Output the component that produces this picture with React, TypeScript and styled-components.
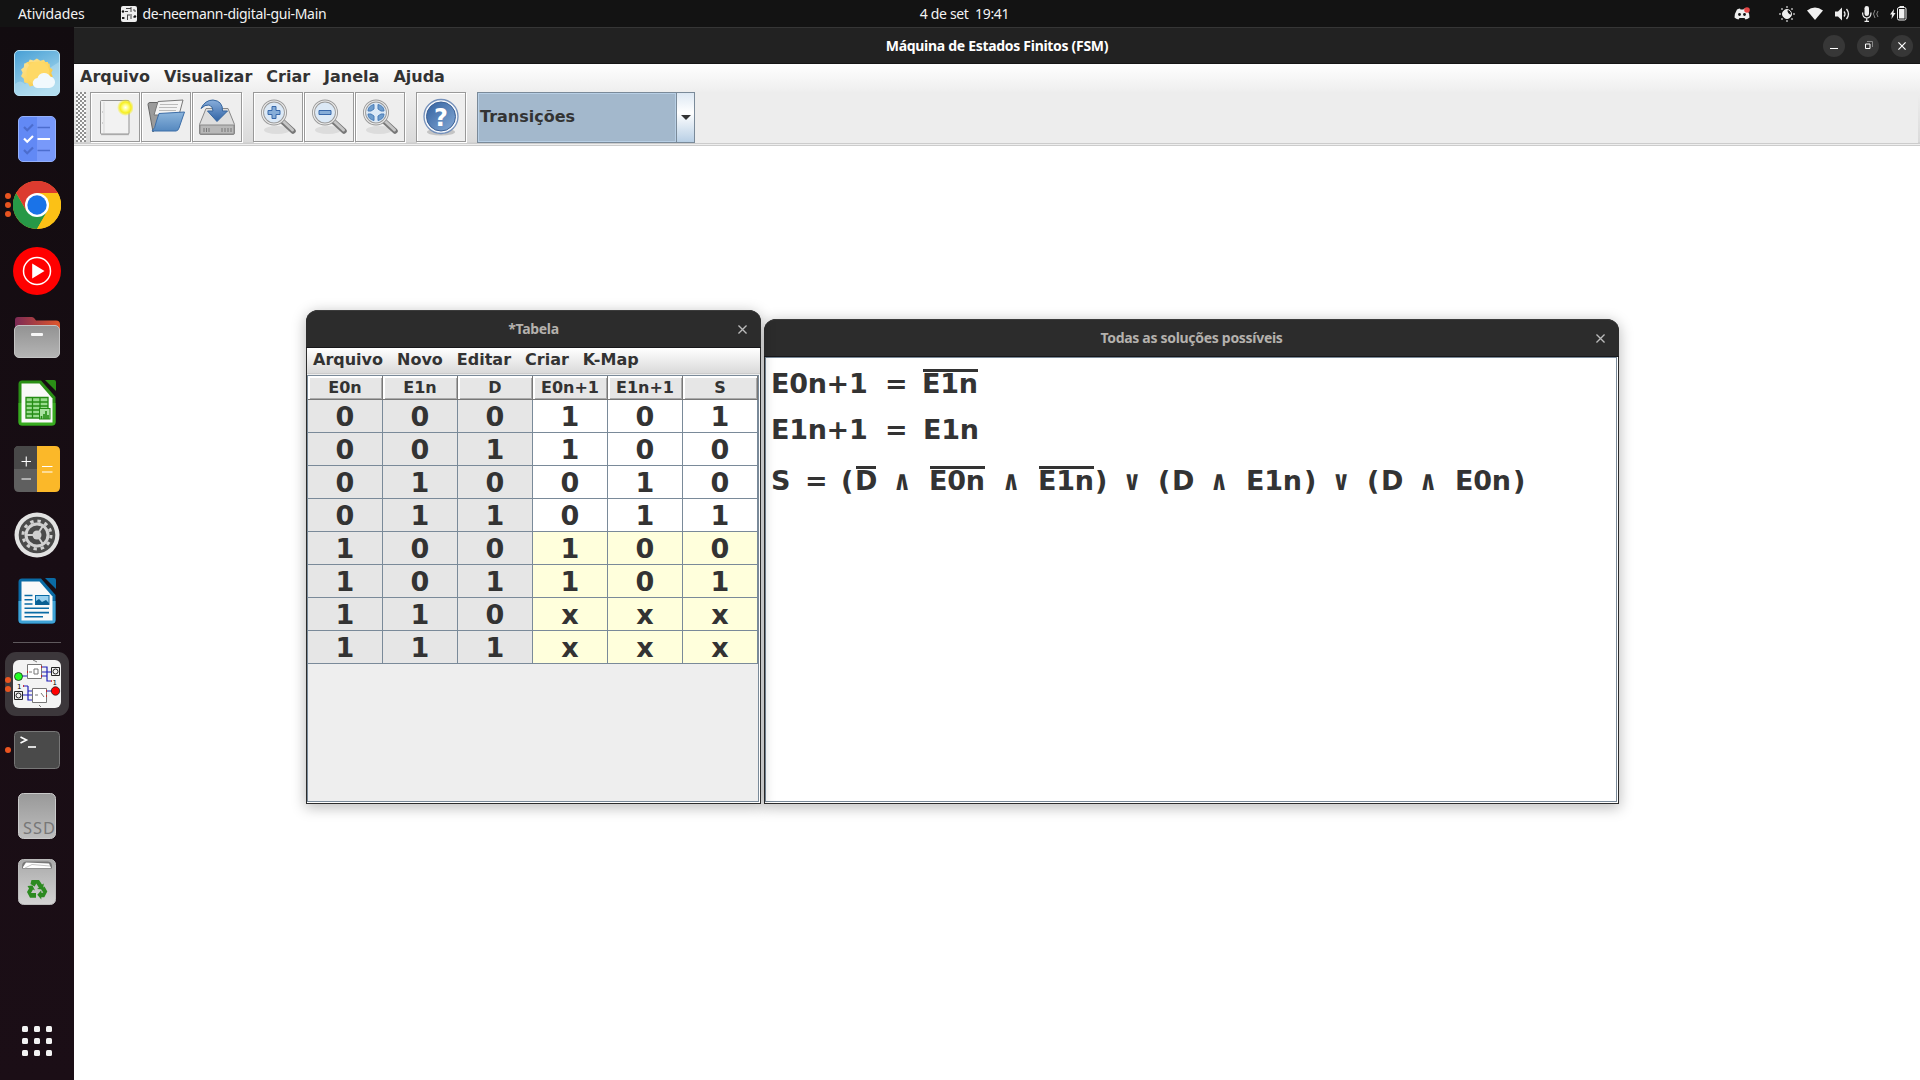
import React from "react";
import styled, { createGlobalStyle, css } from "styled-components";

const Global = createGlobalStyle`
  *{box-sizing:border-box}
  html,body{margin:0;padding:0;background:#fff;overflow:hidden}
  svg{display:block;flex:none}
`;

const swing = `"DejaVu Sans", sans-serif`;
const shell = `"Noto Sans", "Open Sans", sans-serif`;

const Desktop = styled.div`
  width:1920px;height:1080px;display:flex;flex-direction:column;
  position:relative;overflow:hidden;font-family:${swing};color:#333;background:#fff;
`;

/* ---------- top bar ---------- */
const TopBar = styled.header`
  height:27px;flex:none;background:#131313;color:#f2f2f2;
  display:grid;grid-template-columns:1fr auto 1fr;align-items:center;
  font:14px/27px ${shell};padding:0 13px 0 18px;white-space:pre;
`;
const TopLeft = styled.div`display:flex;align-items:center;height:27px;`;
const TopText = styled.span<{ $ls?: number }>`letter-spacing:${p => p.$ls ?? 0}px;`;
const AppName = styled.div`display:flex;align-items:center;gap:6px;margin-left:36px;`;
const Tray = styled.div`display:flex;align-items:center;justify-content:flex-end;height:27px;`;
const TrayItem = styled.span<{ $gap?: number }>`margin-left:${p => p.$gap ?? 12}px;`;
const Clock = styled.div`letter-spacing:-.35px;transform:translateX(2px);`;

const Body = styled.div`flex:1;display:flex;min-height:0;`;

/* ---------- dock ---------- */
const Dock = styled.nav`
  width:74px;flex:none;background:linear-gradient(#120c10,#180d14 50%,#1b0e16);
  display:flex;flex-direction:column;align-items:center;padding-top:13px;
`;
const DockItem = styled.div`
  width:74px;height:66px;flex:none;display:grid;
  grid-template-columns:12px 52px 10px;align-items:center;
`;
const Dots = styled.div`
  display:flex;flex-direction:column;align-items:center;gap:3px;padding-left:4px;
`;
const Dot = styled.i`width:6px;height:6px;border-radius:50%;background:#e95420;flex:none;`;
const DockIcon = styled.div<{ $active?: boolean }>`
  display:flex;align-items:center;justify-content:center;width:50px;height:64px;
  ${p => p.$active && css`width:64px;margin-left:-7px;background:#3c373b;border-radius:11px;`}
`;
const ActiveDots = styled(Dots)`z-index:1;`;
const DockRule = styled.div`height:17px;display:flex;align-items:center;
  &::before{content:"";width:48px;height:1px;background:#5f595d;}`;
const Launcher = styled.div`
  margin-top:auto;margin-bottom:24px;display:grid;grid-template-columns:repeat(3,6px);gap:6px;
`;
const LauncherDot = styled.i`width:6px;height:6px;border-radius:1.5px;background:#f3f3f3;`;

/* ---------- main window ---------- */
const MainWindow = styled.main`flex:1;display:flex;flex-direction:column;min-width:0;`;
const MainTitle = styled.div`
  height:37px;background:#222;border-top:1px solid #363636;border-bottom:1px solid #161616;
  display:grid;grid-template-columns:1fr auto 1fr;align-items:center;color:#fff;
  font:bold 14px/35px ${shell};
`;
const TitleText = styled.span<{ $ls?: number }>`grid-column:2;white-space:nowrap;letter-spacing:${p => p.$ls ?? 0}px;`;
const Controls = styled.div`display:flex;justify-content:flex-end;gap:12px;padding-right:7px;`;
const RoundButton = styled.button`
  width:22px;height:22px;border:0;padding:0;border-radius:50%;background:#373737;
  display:flex;align-items:center;justify-content:center;
`;
const MenuBar = styled.div<{ $inner?: boolean }>`
  display:flex;white-space:nowrap;font:bold 16px/26px ${swing};
  height:28px;padding-left:6px;gap:14px;background:linear-gradient(#fff,#eee);
  ${p => p.$inner && css`
    height:27px;line-height:24px;padding-left:6px;gap:14px;
    background:linear-gradient(#fff,#dadada 25px,#ccc 25px,#ccc 26px,#eee 26px);
  `}
`;
const MenuItem = styled.span<{ $w?: number }>`width:${p => p.$w ? p.$w + "px" : "auto"};`;
const ToolBar = styled.div`
  height:54px;display:flex;align-items:flex-start;padding-left:2px;
  background:linear-gradient(#eee,#dadada 50px,#ccc 51px,#ccc 52px,#eee 52px,#eee 53px,#ccc 53px);
`;
const Grip = styled.div`
  width:10px;height:50px;margin-right:4px;
  background:
    radial-gradient(circle at 1px 1px,#888 .7px,transparent .8px) 0 0/4px 4px,
    radial-gradient(circle at 1px 1px,#888 .7px,transparent .8px) 2px 2px/4px 4px,#fafafa;
`;
const ToolGroup = styled.div`display:flex;gap:1px;margin-right:11px;`;
const ToolButton = styled.button`
  width:50px;height:50px;padding:0;border:1px solid #999;background:#eee;
  box-shadow:inset 1px 1px #fff,1px 1px #fff;display:flex;align-items:center;justify-content:center;
`;
const Combo = styled.div`
  width:218px;height:51px;display:flex;border:1px solid #7a8a99;
`;
const ComboText = styled.div`
  width:198px;border:1px solid #b8cfe5;border-right-width:1px;background:#a3b8cc;
  font:bold 16px/46px ${swing};padding-left:1px;
`;
const ComboArrow = styled.div`
  flex:1;border-left:1px solid #7a8a99;background:linear-gradient(#dde8f3,#fff 40%,#b8cfe5);
  display:flex;align-items:center;justify-content:center;
  &::after{content:"";border:5px solid transparent;border-top-color:#333;border-bottom:0;}
`;
const ToolFill = styled.div`flex:1;height:51px;background:#ededed;margin-right:2px;`;
const Canvas = styled.div`flex:1;background:#fff;`;

/* ---------- dialogs ---------- */
const Dialog = styled.section<{ $x: number; $y: number; $w: number; $h: number }>`
  position:absolute;left:${p => p.$x}px;top:${p => p.$y}px;width:${p => p.$w}px;height:${p => p.$h}px;
  display:flex;flex-direction:column;background:#2c2c2c;border-radius:12px 12px 0 0;
  box-shadow:0 3px 14px 1px rgba(0,0,0,.26);padding:0 1px 1px;
`;
const DialogTitle = styled.div`
  height:38px;flex:none;margin:0 -1px;border-top:1px solid #3c3c3c;border-bottom:1px solid #17171a;
  border-radius:12px 12px 0 0;background:#2c2c2c;color:#b4b1ad;
  display:grid;grid-template-columns:1fr auto 1fr;align-items:center;
  font:bold 14px/36px ${shell};
`;
const CloseX = styled.div<{ $r?: number }>`justify-self:end;padding-right:${p => p.$r ?? 14}px;`;
const DialogBody = styled.div`flex:1;background:#fff;display:flex;flex-direction:column;min-height:0;`;
const ScrollFrame = styled.div<{ $bg: string }>`
  flex:1;border:1px solid #7a8a99;margin:0 1px 1px 0;background:${p => p.$bg};min-height:0;
`;
const HeadRow = styled.div`display:grid;grid-template-columns:repeat(6,75px);height:24px;background:#e6e6e6;`;
const HeadCell = styled.div`
  text-align:center;font:bold 16px/23px ${swing};background:#e6e6e6;
  border-right:1px solid #777;border-bottom:1px solid #777;
  box-shadow:inset 2px 2px #fff,inset -1px -1px #aaa;
`;
const Row = styled.div`display:grid;grid-template-columns:repeat(6,75px);height:33px;`;
const Cell = styled.div<{ $bg: string }>`
  background:${p => p.$bg};border-right:1px solid #7a8a99;border-bottom:1px solid #7a8a99;
  font:bold 27px/33px ${swing};text-align:center;height:33px;overflow:hidden;
`;
const Formula = styled.div<{ $mt: number }>`
  display:flex;height:30px;margin-top:${p => p.$mt}px;padding-left:5px;
  font:bold 27px/30px ${swing};white-space:pre;
`;
const Term = styled.span<{ $w: number }>`width:${p => p.$w}px;flex:none;letter-spacing:-.3px;`;
const Not = styled.span<{ $w: number }>`
  display:block;width:${p => p.$w}px;height:30px;margin-left:1px;text-indent:-1px;
  background:linear-gradient(#333,#333) 0 0/100% 3px no-repeat;
`;
const Op = styled.span<{ $w: number }>`width:${p => p.$w}px;flex:none;font-family:"DejaVu Sans Mono",monospace;`;

/* ---------- drawings ---------- */
const DigitalIcon = ({ s = 48 }: { s?: number }) => (
  <svg width={s} height={s} viewBox="0 0 48 48">
    <rect width="48" height="48" rx="6" fill="#f3f3f3" />
    <g fill="none" stroke="#2020b8" strokeWidth="1.2">
      <path d="M8 16H15M28 7H34V21H38M28 12H38M28 16H34M15 26H10M15 26V40H20M10 35H20M15 31H20M33 31H40" />
    </g>
    <g fill="none" stroke="#777"><path d="M14.5 4.5H28.5V18.5H14.5ZM19.5 28.5H33.5V42.5H19.5Z" fill="#fff" /><path d="M16 12H19M21 9H25V14H21ZM24 2L20 0M22 35H25M28 33L31 37M26 45L28 47" /></g>
    <g fill="none" stroke="#222"><path d="M38.500 7.500h8v8h-8zM1.500 31.500h8v8h-8z" /><circle cx="42.500" cy="11.500" r="2.500" /><circle cx="5.500" cy="35.500" r="2.500" /></g>
    <circle cx="5.500" cy="16.500" r="4" fill="#2f2" stroke="#222" strokeWidth=".8" />
    <circle cx="42.500" cy="31" r="4.200" fill="#f00" stroke="#222" strokeWidth=".8" />
    <path d="M28 7h1M28 16h1M14 12h1M10 26h1M38 21h1M33 31h1M33 36h1" stroke="#d11" strokeWidth="1.600" />
    <text x="39.500" y="24.500" fontFamily="DejaVu Sans" fontSize="7">1</text>
    <text x="4" y="29" fontFamily="DejaVu Sans" fontSize="7">1</text>
  </svg>
);

const MiniDigital = () => (
  <svg width="16" height="16" viewBox="0 0 16 16"><rect width="16" height="16" rx="2" fill="#eee" />
    <path d="M5 2.500h5M10 1v5M4 5.500h3M12 4h2v2M6 9h5M6.500 9v5M3 11v2M10 10v3M12 11h2" fill="none" stroke="#444" />
    <circle cx="2" cy="5.500" r="1.200" fill="#111" /><circle cx="14" cy="10.500" r="1.200" fill="#111" /><path d="M1 11h2v2H1z" fill="#222" /></svg>
);

const Weather = () => (
  <svg width="46" height="46" viewBox="0 0 46 46">
    <defs><linearGradient id="sky" x2=".5" y2="1"><stop stopColor="#479fd5" /><stop offset="1" stopColor="#a9daee" /></linearGradient>
      <linearGradient id="sun" x2="1" y2="1"><stop stopColor="#fbe6a0" /><stop offset=".5" stopColor="#fdd663" /><stop offset="1" stopColor="#f4bd32" /></linearGradient></defs>
    <rect x=".5" y=".5" width="45" height="45" rx="4.500" fill="url(#sky)" stroke="#b9e2f4" />
    <path d="M1 34q5-5 10 0l34-22v29q0 4-4 4H5q-4 0-4-4z" fill="#bfe3f2" opacity=".45" />
    <path d="M23 8l3.500 2.300 4-1 2 3.500 4 .7.400 4 3 2.500-1.700 3.500 1.700 3.600-3 2.700-.4 4-4 .7-2 3.500-4-1L23 39l-3.500-2.300-4 1-2-3.500-4-.7-.4-4-3-2.700 1.700-3.600-1.700-3.500 3-2.500.4-4 4-.7 2-3.500 4 1z" transform="translate(1.300 1) scale(.94)" fill="url(#sun)" />
    <path d="M12 12h22v20z" fill="#fdd663" /><circle cx="24" cy="23" r="11.500" fill="#fed966" />
    <path d="M24 38a5 5 0 0 1-.5-10 7 7 0 0 1 12.800-1.500A5.800 5.800 0 0 1 35 38z" fill="#f1f9fd" />
  </svg>
);
const Tasks = () => (
  <svg width="38" height="46" viewBox="0 0 38 46">
    <rect x=".5" y=".5" width="37" height="45" rx="4.500" fill="#6289f5" stroke="#94b0fb" />
    <path d="M19 1h14q4 0 4 4v36q0 4-4 4H19z" fill="#7899fa" />
    <g fill="none" strokeWidth="2.200"><path d="M6 11l3.200 3.200L15 8.500M6 34l3.200 3.200L15 31.500" stroke="#4c6dce" /><path d="M19.500 11.500H32M19.500 34.500H32" stroke="#4c6dce" strokeWidth="1.700" /><path d="M6 22.500l3.200 3.200L15 20M19.500 23H32" stroke="#fff" /></g>
  </svg>
);
const Chrome = () => (
  <svg width="48" height="48" viewBox="0 0 48 48">
    <circle cx="24" cy="24" r="24" fill="#fbc116" />
    <path d="M24 24L3.200 12A24 24 0 0 1 44.800 12z" fill="#dc3b2f" />
    <path d="M3.200 12A24 24 0 0 0 24 48l10.400-18L24 24 13.600 30z" fill="#279847" />
    <path d="M44.800 12A24 24 0 0 1 24 48L34.400 30 24 12z" fill="#fbc116" />
    <path d="M3.200 12A24 24 0 0 1 44.800 12H24L13.600 30z" fill="#dc3b2f" />
    <circle cx="24" cy="24" r="12" fill="#fff" /><circle cx="24" cy="24" r="9.700" fill="#1a73e8" />
  </svg>
);
const YtMusic = () => (
  <svg width="48" height="48" viewBox="0 0 48 48"><circle cx="24" cy="24" r="24" fill="#f00" /><circle cx="24" cy="24" r="13.500" fill="none" stroke="#fff" strokeWidth="1.500" /><path d="M19.200 16.500v15L31.500 24z" fill="#fff" /></svg>
);
const Files = () => (
  <svg width="46" height="42" viewBox="0 0 46 42">
    <defs><linearGradient id="fo"><stop stopColor="#7c2a55" /><stop offset="1" stopColor="#e0572b" /></linearGradient><linearGradient id="fg" x2="0" y2="1"><stop stopColor="#929292" /><stop offset="1" stopColor="#b5b5b5" /></linearGradient></defs>
    <path d="M1 20V4q0-3 3-3h14q1.500 0 2.500 1.500L22 4.500h20q4 0 4 4V20z" fill="url(#fo)" />
    <rect x=".5" y="9.500" width="45" height="32" rx="4.500" fill="url(#fg)" stroke="#c4c4c4" /><rect x="17" y="17" width="12" height="3" rx="1" fill="#f7f7f7" />
  </svg>
);
const OfficeDoc = ({ a, b, children }: { a: string; b: string; children: React.ReactNode }) => (
  <svg width="38" height="46" viewBox="0 0 38 46">
    <path d="M4 .5H23L37.500 17V42q0 3.500-3.500 3.500H4Q.5 45.500.5 42V4Q.5.500 4 .5z" fill={a} />
    <path d="M.5 23H37.500V42q0 3.500-3.500 3.500H4Q.5 45.500.5 42z" fill={b} />
    <path d="M3.500 3.500H21.500L34.500 18.500V42.500H3.500z" fill="#f9f9f9" />
    <path d="M27 0h9q2 0 2 2v9z" fill={a} />{children}
  </svg>
);
const Calc = () => (
  <OfficeDoc a="#2a8f16" b="#38ab20">
    <path d="M8 17.500H30V38H8z" fill="#98dc8d" /><path d="M8 17.500H30V38H8zM8 22h22M8 26h22M8 30h22M8 34h22M14.500 17.500V38M22 17.500V38" fill="none" stroke="#248c14" strokeWidth="1.300" />
    <rect x="21.500" y="28.500" width="10.500" height="10.500" fill="#a9e2a1" stroke="#248c14" /><path d="M23.500 39v-3M26 39v-5M28 39v-8M30 39v-4" stroke="#248c14" strokeWidth="1.600" />
  </OfficeDoc>
);
const Writer = () => (
  <OfficeDoc a="#0a6ba5" b="#3fa3d6">
    <path d="M6.500 17.500h8M6.500 21.700h8M6.500 26h8M6.500 30.300H31M6.500 34.600H31M6.500 38.800H25" stroke="#0a6ba5" strokeWidth="1.600" />
    <rect x="17.500" y="17.500" width="13.500" height="9" fill="#9bd1ef" stroke="#0a6ba5" /><path d="M18 27v-4l3-2 3 3 4-2 3 3v2z" fill="#0a5f93" />
  </OfficeDoc>
);
const Calculator = () => (
  <svg width="46" height="46" viewBox="0 0 46 46">
    <path d="M23 0v46H5q-5 0-5-5V5q0-5 5-5z" fill="#5f5f5f" /><path d="M23 0v23H0V5q0-5 5-5z" fill="#484848" />
    <path d="M23 0h18q5 0 5 5v36q0 5-5 5H23z" fill="#fbb829" /><path d="M7.500 15.500h9.500M12.250 10.500v10M7.500 33h9.500M28 20.500h10.500M28 26h10.500" stroke="#fff" strokeWidth="1.100" />
  </svg>
);
const Settings = () => (
  <svg width="46" height="46" viewBox="0 0 46 46">
    <circle cx="23" cy="23" r="22.500" fill="#e2e2e2" /><circle cx="23" cy="23" r="18.300" fill="#4a4a4a" />
    <circle cx="23" cy="23" r="14" fill="none" stroke="#d0d0d0" strokeWidth="3" strokeDasharray="3.400 3.930" />
    <circle cx="23" cy="23" r="11" fill="none" stroke="#d0d0d0" strokeWidth="3" />
    <circle cx="23" cy="23" r="4.500" fill="#d0d0d0" /><path d="M23 23H12M23 23l6.500-10M23 23l6.500 10" stroke="#d0d0d0" strokeWidth="2" />
  </svg>
);
const Terminal = () => (
  <svg width="46" height="38" viewBox="0 0 46 38"><rect x=".5" y=".5" width="45" height="37" rx="4" fill="#4a4a4a" stroke="#777" />
    <path d="M6.500 6l6 3-6 3" fill="none" stroke="#fff" strokeWidth="1.600" /><path d="M14 16h8" stroke="#fff" strokeWidth="1.600" /></svg>
);
const Ssd = () => (
  <svg width="38" height="46" viewBox="0 0 38 46"><defs><linearGradient id="sd" x2="0" y2="1"><stop stopColor="#999" /><stop offset="1" stopColor="#bdbdbd" /></linearGradient></defs>
    <rect x=".5" y=".5" width="37" height="45" rx="5" fill="url(#sd)" stroke="#cacaca" /><text x="5" y="40.500" fontFamily="Noto Sans" fontSize="16.500" textLength="32" fill="#777">SSD</text></svg>
);
const Trash = () => (
  <svg width="38" height="46" viewBox="0 0 38 46"><defs><linearGradient id="tr" x2="0" y2="1"><stop stopColor="#aaa" /><stop offset="1" stopColor="#d3d3d3" /></linearGradient></defs>
    <rect x=".5" y=".5" width="37" height="45" rx="5" fill="url(#tr)" stroke="#bbb" />
    <path d="M4 9.500q-.5-7 4-7h22q4.500 0 4 7z" fill="#777" /><path d="M5 8l3-4.500 23 1 2 4.500H5z" fill="#fff" /><path d="M7 9l7-3.500L32 7" fill="none" stroke="#aaa" strokeWidth=".7" />
    <g fill="#2c8a20"><g id="ar"><path d="M14 21.500h7.500l3 4.500 1.800-1L25.500 31l-6-.5 1.900-1.200-2.600-4.300-1.700 3-4.100-2.400z" transform="translate(-.5 -.5)" /></g>
      <path d="M9.500 27l5-.5 2.500 5-2-1-2 3.500h5v4.700h-6L9 33l2-3.500z" /><path d="M26.500 27.500l2.800 5-3 5.700h-3v2.300l-4-4.700 4-4.500v2.400h2l-2.200-3.700z" /></g></svg>
);

const NewFile = () => (
  <svg width="36" height="38" viewBox="0 0 36 38"><defs><radialGradient id="glow"><stop stopColor="#fff" /><stop offset=".3" stopColor="#ffff90" /><stop offset=".65" stopColor="#f6ee20" /><stop offset="1" stopColor="#f6ee20" stopOpacity="0" /></radialGradient></defs>
    <path d="M4 36h28" stroke="#999" strokeWidth="2.500" opacity=".5" /><rect x="3.500" y="2.500" width="28.500" height="33.500" rx="1" fill="#f2f2f2" stroke="#929292" /><path d="M7 4v31" stroke="#d9d9d9" /><path d="M5 14h1M5 25h1" stroke="#aaa" />
    <circle cx="28.500" cy="9.500" r="8.500" fill="url(#glow)" /></svg>
);
const OpenFile = () => (
  <svg width="40" height="36" viewBox="0 0 40 36"><defs><linearGradient id="of" x2="0" y2="1"><stop stopColor="#8db6dd" /><stop offset="1" stopColor="#5588bf" /></linearGradient></defs>
    <path d="M2 5.500q0-2 2-2h9v20L7 33z" fill="#9b9b9b" stroke="#666" /><path d="M12 2.500l25-1.500-4 15H8z" fill="#f3f3f3" stroke="#777" /><path d="M14 5.500h18M13 8.500h18M13 11.500h17" stroke="#bbb" />
    <path d="M13 14.500L38.500 13 33 29q-1 3-3 3H6q3-2 4.500-10z" fill="url(#of)" stroke="#3d6ea8" /></svg>
);
const SaveFile = () => (
  <svg width="40" height="37" viewBox="0 0 40 37"><defs><linearGradient id="sv" x2="0" y2="1"><stop stopColor="#89aedb" /><stop offset="1" stopColor="#2f62a4" /></linearGradient></defs>
    <path d="M9 9.500h22l6.500 16V34q0 1.500-1.500 1.500H4q-1.500 0-1.500-1.500v-8.500z" fill="#dedede" stroke="#888" /><path d="M3 26h34v8q0 1-1 1H4q-1 0-1-1z" fill="#b8b8b8" stroke="#888" /><path d="M7 29v4M9.500 29v4M12 29v4M25 29v4M28 29v4M31 29v4M34 29v4" stroke="#777" />
    <path d="M4 9.500Q8 1 16 1q10 1 9.500 11h5L20 22.500 10.500 12h5.500q0-5-4-6-4-.5-8 3.500z" fill="url(#sv)" stroke="#34659f" /></svg>
);
const Zoom = ({ kind }: { kind: "in" | "out" | "fit" }) => (
  <svg width="40" height="38" viewBox="0 0 40 38">
    <ellipse cx="19" cy="32" rx="13" ry="4" fill="#bbb" opacity=".35" />
    <path d="M24 23l11 10" stroke="#777" strokeWidth="5.500" strokeLinecap="round" /><path d="M25 23l9.500 9" stroke="#c6c6c6" strokeWidth="3" strokeLinecap="round" />
    <circle cx="16" cy="14.500" r="11.500" fill="#dce9f6" stroke="#999" strokeWidth="3" /><circle cx="16" cy="14.500" r="11.500" fill="none" stroke="#eee" strokeWidth="1.200" />
    {kind === "in" && <path d="M14 8.500h4v4h4v4h-4v4h-4v-4h-4v-4h4z" fill="#86add8" stroke="#3768ab" />}
    {kind === "out" && <path d="M10 12.500h12v4H10z" fill="#86add8" stroke="#3768ab" />}
    {kind === "fit" && <path d="M14 6.500v4.500l-3 2H8q0-5 6-6.500zM18 6.500v4.500l3 2h3q0-5-6-6.500zM14 22.500V18l-3-2H8q0 5 6 6.500zM18 22.500V18l3-2h3q0 5-6 6.500z" fill="#6f9dcc" stroke="#4a7db8" />}
  </svg>
);
const Help = () => (
  <svg width="38" height="38" viewBox="0 0 38 38"><defs><linearGradient id="hp" x2="1" y2="1"><stop stopColor="#31609f" /><stop offset="1" stopColor="#86aad6" /></linearGradient></defs>
    <ellipse cx="19" cy="34" rx="14" ry="3.500" fill="#999" opacity=".5" /><circle cx="19" cy="18.500" r="17" fill="#f5f8fc" stroke="#7591bb" strokeWidth="1.300" /><circle cx="19" cy="18.500" r="14.500" fill="url(#hp)" stroke="#3d6297" />
    <text x="19" y="27.500" textAnchor="middle" fontFamily="DejaVu Sans" fontWeight="bold" fontSize="24" fill="#fff">?</text></svg>
);

const Discord = () => (
  <svg width="16" height="14" viewBox="0 0 16 14"><path d="M3 2.500Q5 1.500 6 1.500l.5 1h3l.5-1q1 0 3 1 2.500 4 2.500 8-1.500 1.500-4 2L10.500 11h-5L4.500 12.500Q2 12 .5 10.500q0-4 2.500-8z" fill="#eee" /><circle cx="5.500" cy="7.500" r="1.400" fill="#131313" /><circle cx="10.500" cy="7.500" r="1.400" fill="#131313" /><circle cx="13" cy="3" r="2.800" fill="#e64545" /></svg>
);
const Night = () => (
  <svg width="16" height="16" viewBox="0 0 16 16"><circle cx="8" cy="8" r="4.500" fill="none" stroke="#eee" /><path d="M8 3.500A4.500 4.500 0 1 0 12.500 8 4 4 0 0 1 8 3.500z" fill="#eee" transform="rotate(8 8 8)" /><g fill="#888"><path d="M7 0h2v2H7zM7 14h2v2H7zM0 7h2v2H0zM14 7h2v2h-2zM2 2h2v2H2zM12 2h2v2h-2zM2 12h2v2H2zM12 12h2v2h-2z" /></g></svg>
);
const Wifi = () => <svg width="16" height="13" viewBox="0 0 16 13"><path d="M0 3.500Q8-2.500 16 3.500L8 13z" fill="#f1f1f1" /></svg>;
const Volume = () => <svg width="15" height="14" viewBox="0 0 15 14"><path d="M0 4.500h3L7 .5v13l-4-4H0z" fill="#eee" /><path d="M9 4.500q2 2.500 0 5M11.500 2q4 5 0 10" stroke="#eee" strokeWidth="1.300" fill="none" /></svg>;
const Mic = () => <svg width="17" height="16" viewBox="0 0 17 16"><rect x="2.500" y="0" width="4.500" height="10" rx="2.250" fill="#eee" /><path d="M.6 6.500Q.5 12 4.750 12T9 6.500M4.750 12v3.500M2.500 15.400h4.500" stroke="#eee" strokeWidth="1.200" fill="none" /><path d="M13 4q-3 4 0 8M16 5q-2.500 3 0 6" stroke="#888" fill="none" /></svg>;
const Battery = () => <svg width="17" height="15" viewBox="0 0 17 15"><path d="M4 3L0 8.500h2L1.500 13l4-6h-2z" fill="#eee" /><rect x="7.500" y="1.500" width="8.500" height="12.500" rx="1.500" fill="none" stroke="#eee" /><path d="M9 3h5.500v9.500H9zM9.500 0h4.500v1H9.500z" fill="#eee" /></svg>;
const Cross = ({ s, c }: { s: number; c: string }) => <svg width={s} height={s} viewBox="0 0 8 8"><path d="M.4.4l7.200 7.200M7.600.4L.4 7.600" stroke={c} strokeWidth="1.200" /></svg>;

const dockTop = [
  { icon: <Weather />, dots: 0 }, { icon: <Tasks />, dots: 0 }, { icon: <Chrome />, dots: 3 },
  { icon: <YtMusic />, dots: 0 }, { icon: <Files />, dots: 0 }, { icon: <Calc />, dots: 0 },
  { icon: <Calculator />, dots: 0 }, { icon: <Settings />, dots: 0 }, { icon: <Writer />, dots: 0 },
];
const dockBottom = [
  { icon: <DigitalIcon />, dots: 2, active: true }, { icon: <Terminal />, dots: 1 },
  { icon: <Ssd />, dots: 0 }, { icon: <Trash />, dots: 0 },
];
const DockEntry = ({ icon, dots, active }: { icon: React.ReactNode; dots: number; active?: boolean }) => (
  <DockItem>
    <ActiveDots>{Array.from({ length: dots }, (_, i) => <Dot key={i} />)}</ActiveDots>
    <DockIcon $active={active}>{icon}</DockIcon>
  </DockItem>
);

const columns = ["E0n", "E1n", "D", "E0n+1", "E1n+1", "S"];
const truth = ["000101", "001100", "010010", "011011", "100100", "101101", "110xxx", "111xxx"];
const cellColor = (r: number, c: number) => (c < 3 ? "#e6e6e6" : r < 4 ? "#fff" : "#ffffdc");

export default function App() {
  return (
    <Desktop>
      <Global />
      <TopBar>
        <TopLeft>
          <TopText $ls={-0.15}>Atividades</TopText>
          <AppName><MiniDigital /><TopText $ls={-0.3}>de-neemann-digital-gui-Main</TopText></AppName>
        </TopLeft>
        <Clock>4 de set  19:41</Clock>
        <Tray>
          <TrayItem><Discord /></TrayItem><TrayItem $gap={29}><Night /></TrayItem><TrayItem><Wifi /></TrayItem>
          <TrayItem><Volume /></TrayItem><TrayItem><Mic /></TrayItem><TrayItem $gap={11}><Battery /></TrayItem>
        </Tray>
      </TopBar>
      <Body>
        <Dock>
          {dockTop.map((d, i) => <DockEntry key={i} {...d} />)}
          <DockRule />
          {dockBottom.map((d, i) => <DockEntry key={i} {...d} />)}
          <Launcher>{Array.from({ length: 9 }, (_, i) => <LauncherDot key={i} />)}</Launcher>
        </Dock>
        <MainWindow>
          <MainTitle>
            <TitleText $ls={-0.3}>Máquina de Estados Finitos (FSM)</TitleText>
            <Controls>
              <RoundButton><svg width="8" height="8"><path d="M0 6.500h8" stroke="#fff" /></svg></RoundButton>
              <RoundButton><svg width="9" height="9"><path d="M1.500 3h4.500v4.500H1.500z" fill="none" stroke="#fff" /><path d="M3 .5h5.500V6" fill="none" stroke="#888" /></svg></RoundButton>
              <RoundButton><Cross s={8} c="#fff" /></RoundButton>
            </Controls>
          </MainTitle>
          <MenuBar>
            {["Arquivo", "Visualizar", "Criar", "Janela", "Ajuda"].map(m => <MenuItem key={m}>{m}</MenuItem>)}
          </MenuBar>
          <ToolBar>
            <Grip />
            <ToolGroup><ToolButton><NewFile /></ToolButton><ToolButton><OpenFile /></ToolButton><ToolButton><SaveFile /></ToolButton></ToolGroup>
            <ToolGroup><ToolButton><Zoom kind="in" /></ToolButton><ToolButton><Zoom kind="out" /></ToolButton><ToolButton><Zoom kind="fit" /></ToolButton></ToolGroup>
            <ToolGroup><ToolButton><Help /></ToolButton></ToolGroup>
            <Combo><ComboText>Transições</ComboText><ComboArrow /></Combo>
            <ToolFill />
          </ToolBar>
          <Canvas />
        </MainWindow>
      </Body>

      <Dialog $x={764} $y={319} $w={855} $h={485}>
        <DialogTitle><TitleText $ls={-0.3}>Todas as soluções possíveis</TitleText><CloseX><Cross s={9} c="#bbb" /></CloseX></DialogTitle>
        <DialogBody>
          <ScrollFrame $bg="#fff">
            <Formula $mt={11}>
              <Term $w={114}>E0n+1</Term><Term $w={37}>=</Term><Term $w={60}><Not $w={55}>E1n</Not></Term>
            </Formula>
            <Formula $mt={16}>
              <Term $w={114}>E1n+1</Term><Term $w={38}>=</Term><Term $w={60}>E1n</Term>
            </Formula>
            <Formula $mt={21}>
              <Term $w={34}>S</Term><Term $w={36}>=</Term><Term $w={14}>(</Term><Term $w={39}><Not $w={20}>D</Not></Term>
              <Op $w={35}>∧</Op><Term $w={74}><Not $w={55}>E0n</Not></Term><Op $w={35}>∧</Op>
              <Term $w={57}><Not $w={55}>E1n</Not></Term><Term $w={29}>)</Term><Op $w={34}>∨</Op>
              <Term $w={14}>(</Term><Term $w={39}>D</Term><Op $w={35}>∧</Op><Term $w={58}>E1n</Term><Term $w={29}>)</Term>
              <Op $w={34}>∨</Op><Term $w={14}>(</Term><Term $w={39}>D</Term><Op $w={35}>∧</Op><Term $w={58}>E0n</Term><Term $w={20}>)</Term>
            </Formula>
          </ScrollFrame>
        </DialogBody>
      </Dialog>

      <Dialog $x={306} $y={310} $w={455} $h={494}>
        <DialogTitle><TitleText $ls={-0.3}>*Tabela</TitleText><CloseX><Cross s={9} c="#bbb" /></CloseX></DialogTitle>
        <DialogBody>
          <MenuBar $inner>
            {["Arquivo", "Novo", "Editar", "Criar", "K-Map"].map(m => <MenuItem key={m}>{m}</MenuItem>)}
          </MenuBar>
          <ScrollFrame $bg="#eee">
            <HeadRow>{columns.map(c => <HeadCell key={c}>{c}</HeadCell>)}</HeadRow>
            {truth.map((row, r) => (
              <Row key={r}>{row.split("").map((v, c) => <Cell key={c} $bg={cellColor(r, c)}>{v}</Cell>)}</Row>
            ))}
          </ScrollFrame>
        </DialogBody>
      </Dialog>
    </Desktop>
  );
}
